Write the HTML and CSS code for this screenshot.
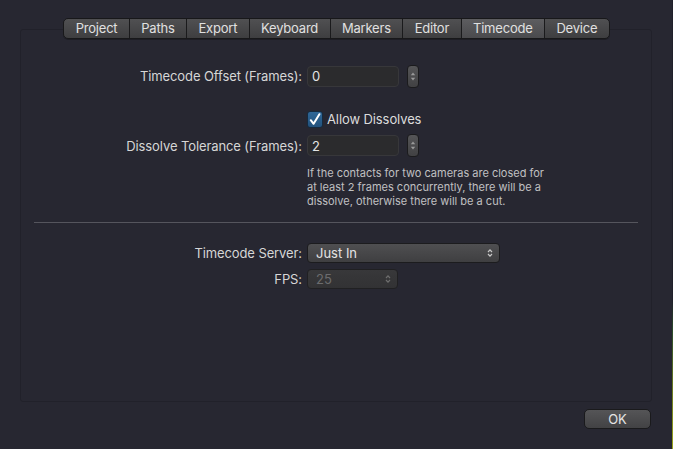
FILE: index.html
```html
<!DOCTYPE html>
<html>
<head>
<meta charset="utf-8">
<link rel="stylesheet" href="styles.css">
</head>
<body>
<div class="window">
  <div class="tabbar">
    <div class="tab">Project</div>
    <div class="tab">Paths</div>
    <div class="tab">Export</div>
    <div class="tab">Keyboard</div>
    <div class="tab">Markers</div>
    <div class="tab">Editor</div>
    <div class="tab tab-active">Timecode</div>
    <div class="tab">Device</div>
  </div>
  <div class="panel">
    <div class="row row-offset">
      <div class="label">Timecode Offset (Frames):</div>
      <div class="field">0</div>
      <div class="stepper">
        <svg width="6" height="11" viewBox="0 0 6 11"><path d="M3 1.5 L5.2 4.2 H0.8 Z" fill="#9a9a9a"/><path d="M3 9.5 L5.2 6.8 H0.8 Z" fill="#9a9a9a"/></svg>
      </div>
    </div>
    <div class="row row-check">
      <div class="label"></div>
      <div class="checkbox">
        <svg width="12" height="13" viewBox="0 0 12 13"><path d="M1.8 7.2 L4.6 10.8 L10.4 1.2" fill="none" stroke="#ffffff" stroke-width="2" stroke-linecap="round" stroke-linejoin="round"/></svg>
      </div>
      <div class="check-text">Allow Dissolves</div>
    </div>
    <div class="row row-tol">
      <div class="label">Dissolve Tolerance (Frames):</div>
      <div class="field">2</div>
      <div class="stepper">
        <svg width="6" height="11" viewBox="0 0 6 11"><path d="M3 1.5 L5.2 4.2 H0.8 Z" fill="#9a9a9a"/><path d="M3 9.5 L5.2 6.8 H0.8 Z" fill="#9a9a9a"/></svg>
      </div>
    </div>
    <div class="help">If the contacts for two cameras are closed for<br>at least 2 frames concurrently, there will be a<br>dissolve, otherwise there will be a cut.</div>
    <div class="separator"></div>
    <div class="row row-server">
      <div class="label">Timecode Server:</div>
      <div class="popup popup-wide">
        <span>Just In</span>
        <svg width="6" height="10" viewBox="0 0 6 10"><path d="M1 4 L3 1.8 L5 4" fill="none" stroke="#c8c8c8" stroke-width="1.2"/><path d="M1 6 L3 8.2 L5 6" fill="none" stroke="#c8c8c8" stroke-width="1.2"/></svg>
      </div>
    </div>
    <div class="row row-fps">
      <div class="label">FPS:</div>
      <div class="popup popup-small popup-disabled">
        <span>25</span>
        <svg width="6" height="10" viewBox="0 0 6 10"><path d="M1 4 L3 1.8 L5 4" fill="none" stroke="#6e6e6e" stroke-width="1.2"/><path d="M1 6 L3 8.2 L5 6" fill="none" stroke="#6e6e6e" stroke-width="1.2"/></svg>
      </div>
    </div>
  </div>
  <div class="footer">
    <div class="button">OK</div>
  </div>
  <div class="edge"></div>
</div>
</body>
</html>
```

FILE: styles.css
```css
html, body {
  margin: 0;
  padding: 0;
  background: #272731;
}
body {
  width: 673px;
  height: 449px;
  overflow: hidden;
  font-family: Inter, "Noto Sans", sans-serif;
  font-size: 13px;
  color: #d6d6d6;
}
.window {
  position: relative;
  width: 673px;
  height: 449px;
  display: flex;
  flex-direction: column;
}
.tabbar {
  position: relative;
  z-index: 1;
  margin-top: 18px;
  align-self: center;
  display: flex;
  height: 21px;
  box-sizing: border-box;
  border: 1px solid #18181a;
  border-radius: 5px;
  background: linear-gradient(#505052, #3e3e40);
  box-shadow: 0 1px 0 rgba(0,0,0,0.25);
  overflow: hidden;
}
.tab {
  display: flex;
  align-items: center;
  padding: 0 11.4px;
  font-size: 13px;
  letter-spacing: -0.2px;
  color: #e0e0e0;
  border-left: 1px solid #1a1a1c;
  line-height: 1;
}
.tab:first-child {
  border-left: none;
}
.tab-active {
  background: linear-gradient(#5d5d60, #4a4a4d);
}
.panel {
  margin: -10px 21px 0 20px;
  height: 373px;
  box-sizing: border-box;
  border: 1px solid #21212a;
  border-radius: 3px;
  background: transparent;
  display: flex;
  flex-direction: column;
}
.row {
  display: flex;
  align-items: center;
}
.label {
  width: 281px;
  margin-right: 5px;
  text-align: right;
  white-space: nowrap;
  letter-spacing: -0.1px;
  flex: none;
}
.row-offset {
  margin-top: 34px;
  height: 24px;
}
.row-check {
  margin-top: 22px;
  height: 18px;
}
.row-tol {
  margin-top: 6px;
  height: 23px;
}
.field {
  width: 92px;
  height: 21px;
  box-sizing: border-box;
  border: 1px solid #37373a;
  border-radius: 4px;
  background: #2b2b2d;
  padding-left: 4px;
  display: flex;
  align-items: center;
  color: #e4e4e4;
}
.stepper {
  margin-left: 8px;
  width: 12px;
  height: 23px;
  box-sizing: border-box;
  border: 1px solid #1b1b1d;
  border-radius: 4px;
  background: linear-gradient(#555557, #414143);
  display: flex;
  align-items: center;
  justify-content: center;
}
.checkbox {
  width: 16px;
  height: 17px;
  box-sizing: border-box;
  border: 1px solid #162a3e;
  border-radius: 3px;
  background: linear-gradient(#2f6797, #22527d);
  display: flex;
  align-items: center;
  justify-content: center;
}
.check-text {
  margin-left: 4px;
  letter-spacing: -0.1px;
  color: #dcdcdc;
}
.help {
  margin-top: 9px;
  margin-left: 286px;
  font-size: 11px;
  line-height: 14.2px;
  color: #c0c0c2;
  white-space: nowrap;
}
.separator {
  margin: 13px 13px 0 13px;
  height: 1px;
  background: #55555d;
}
.row-server {
  margin-top: 20px;
  height: 20px;
}
.row-fps {
  margin-top: 6px;
  height: 20px;
}
.popup {
  height: 20px;
  box-sizing: border-box;
  border: 1px solid #1c1c1e;
  border-radius: 4px;
  background: linear-gradient(#4f4f51, #3f3f41);
  display: flex;
  align-items: center;
  justify-content: space-between;
  padding: 0 6px 0 8px;
  color: #e4e4e4;
}
.popup-wide {
  width: 193px;
}
.popup-small {
  width: 91px;
}
.popup-disabled {
  background: linear-gradient(#38383a, #323234);
  border-color: #202022;
  color: #6c6c6e;
}
.footer {
  display: flex;
  justify-content: flex-end;
  margin: 7px 22px 0 0;
}
.button {
  width: 67px;
  height: 20px;
  box-sizing: border-box;
  border: 1px solid #1a1a1c;
  border-radius: 5px;
  background: linear-gradient(#555557, #424244);
  display: flex;
  align-items: center;
  justify-content: center;
  color: #e4e4e4;
  font-size: 13px;
}
.edge {
  position: absolute;
  right: 0;
  top: 0;
  width: 1px;
  height: 449px;
  background: linear-gradient(#20202a 0, #20202a 300px, #2a4a2a 330px, #6a7a20 390px, #9aa41c 449px);
}
```
